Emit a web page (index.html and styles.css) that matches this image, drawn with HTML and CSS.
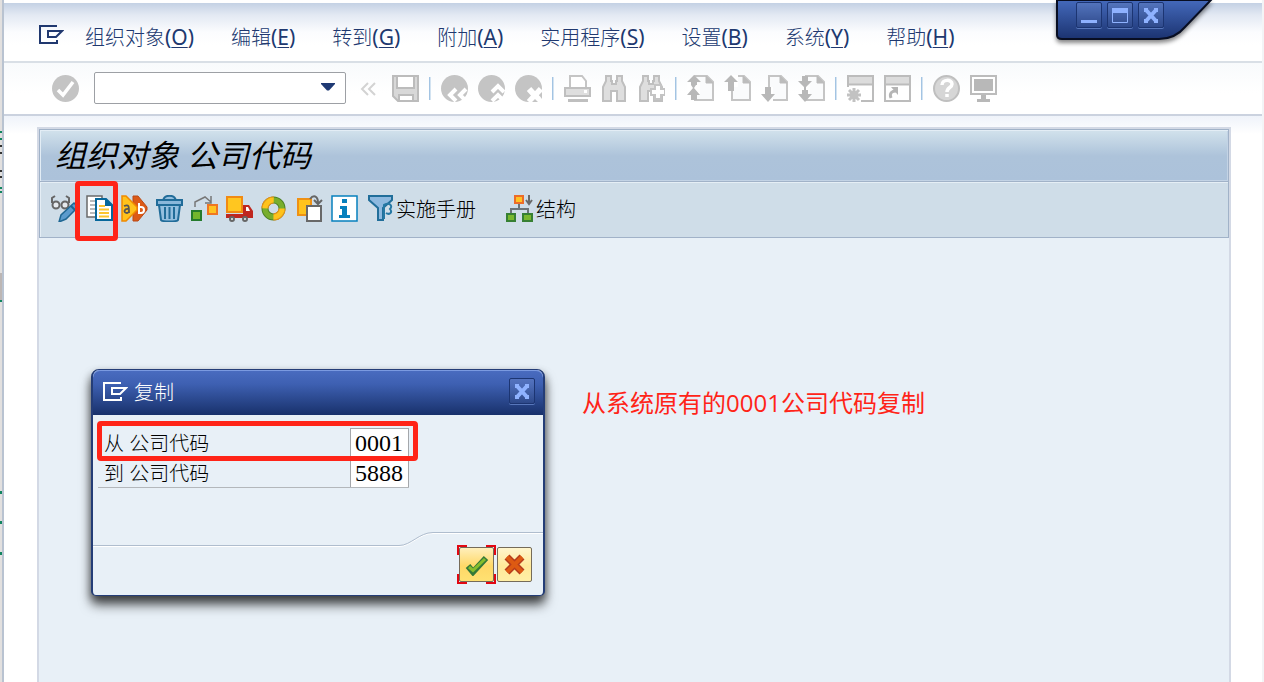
FILE: index.html
```html
<!DOCTYPE html>
<html lang="zh-CN">
<head>
<meta charset="utf-8">
<title>组织对象 公司代码</title>
<link rel="stylesheet" href="styles.css">
</head>
<body>
<svg class="defs" aria-hidden="true">
  <defs>
    <symbol id="pointer" viewBox="0 0 25 19"><path d="M18 1H1v17h17v-3" fill="none" stroke="currentColor" stroke-width="2"/><path d="M9 6h14l-6 6H9z" fill="none" stroke="currentColor" stroke-width="2"/></symbol>
    <symbol id="page" viewBox="0 0 27 27"><path d="M8 1h12l6 6v18H8z" fill="#fafbfc" stroke="#c5c5c5" stroke-width="2"/><path d="M19 1v7h7z" fill="#bcbcbc" stroke="#bcbcbc"/></symbol>
    <symbol id="cross" viewBox="0 0 16 15"><path d="M3 2l10 11M13 2L3 13" stroke="#8fb2ff" stroke-width="4"/><path d="M1 0h4v4H1zM11 0h4v4h-4zM1 11h4v4H1zM11 11h4v4h-4z" fill="#8fb2ff"/></symbol>
    <symbol id="disc" viewBox="0 0 27 27"><circle cx="13.500" cy="13.500" r="13.500" fill="#c4c4c4"/></symbol>
    <symbol id="binoculars" viewBox="0 0 27 27"><path d="M5 1h5v5h1v3h4V6h1V1h5v5l3 6v14h-8V16h-6v10H2V12l3-6z" fill="#dedede" stroke="#bfbfbf" stroke-width="2"/></symbol>
  </defs>
</svg>
<div class="desktop">
  <div class="sheet-edge"></div>
  <div class="app">
    <nav class="menubar">
      <button class="menu-icon" aria-label="菜单"><svg width="25" height="19"><use href="#pointer"/></svg></button>
      <button>组织对象<span class="key">(<u>O</u>)</span></button>
      <button>编辑<span class="key">(<u>E</u>)</span></button>
      <button>转到<span class="key">(<u>G</u>)</span></button>
      <button>附加<span class="key">(<u>A</u>)</span></button>
      <button>实用程序<span class="key">(<u>S</u>)</span></button>
      <button>设置<span class="key">(<u>B</u>)</span></button>
      <button>系统<span class="key">(<u>Y</u>)</span></button>
      <button>帮助<span class="key">(<u>H</u>)</span></button>
    </nav>

    <div class="toolbar">
      <button class="enter" aria-label="回车"><svg viewBox="0 0 27 27"><use href="#disc"/><path d="M6 15l5 5L21 7" fill="none" stroke="#fff" stroke-width="3.500"/></svg></button>
      <div class="command">
        <input type="text" aria-label="命令">
        <button aria-label="历史记录"><svg class="arrow" viewBox="0 0 14 8"><path d="M0 0h14v1L8 7.500H6L0 1z" fill="#1f3a74"/></svg></button>
      </div>
      <button class="collapse" aria-label="收起"><svg viewBox="0 0 27 27"><path d="M12 8l-6 6 6 6M19 8l-6 6 6 6" fill="none" stroke="#d3d3d3" stroke-width="2"/></svg></button>
      <button aria-label="保存"><svg viewBox="0 0 27 27"><path d="M1 1h25v25H6l-5-5z" fill="#d8d8d8" stroke="#bcbcbc" stroke-width="2"/><path d="M5 1h17v12H5zM7 26v-6h14v6z" fill="#fff" stroke="#bcbcbc" stroke-width="2"/></svg></button>
      <span class="sep"></span>
      <button aria-label="返回"><svg viewBox="0 0 27 27"><use href="#disc"/><path d="M15 14l-6 6 6 6M25 14l-6 6 6 6" fill="none" stroke="#fff" stroke-width="4"/></svg></button>
      <button aria-label="退出"><svg viewBox="0 0 27 27"><use href="#disc"/><path d="M14 17l6-6 6 6M14 26l6-6 6 6" fill="none" stroke="#fff" stroke-width="4"/></svg></button>
      <button aria-label="取消"><svg viewBox="0 0 27 27"><use href="#disc"/><path d="M14 14l12 13M26 14L14 27" fill="none" stroke="#fff" stroke-width="6"/><path d="M20 24l3 3h-6zM24 20l3-3v7z" fill="#c4c4c4"/></svg></button>
      <span class="sep"></span>
      <button aria-label="打印"><svg viewBox="0 0 27 27"><path d="M6 13V1h12l4 5v7" fill="#fff" stroke="#c5c5c5" stroke-width="2"/><path d="M1 13h25v8H1z" fill="#dedede" stroke="#bfbfbf" stroke-width="2"/><path d="M4 24h20v3H4z" fill="#bfbfbf"/><path d="M20 15h3v3h-3z" fill="#fff"/></svg></button>
      <button aria-label="查找"><svg viewBox="0 0 27 27"><use href="#binoculars"/></svg></button>
      <button aria-label="查找下一个"><svg viewBox="0 0 27 27"><use href="#binoculars"/><path d="M16 9h8v4h3v8h-3v4h-8v-4h-4v-8h4z" fill="#c4c4c4"/><path d="M18 11h4v4h4v4h-4v4h-4v-4h-4v-4h4z" fill="#fff"/></svg></button>
      <span class="sep"></span>
      <button aria-label="首页"><svg viewBox="0 0 27 27"><use href="#page"/><path d="M0 8h13v12H0z" fill="#fff"/><path d="M7 0l7 7h-4v3h-1l-2 3 6 7h-3v5H4v-5H0l6-7-2-3V7H0z" fill="#b8b8b8"/></svg></button>
      <button aria-label="上一页"><svg viewBox="0 0 27 27"><use href="#page"/><path d="M6 0h8v12H6z" fill="#fff"/><path d="M7 0l7 7h-4v9H4V7H0z" fill="#b8b8b8"/></svg></button>
      <button aria-label="下一页"><svg viewBox="0 0 27 27"><use href="#page"/><path d="M4 12h8v15H4z" fill="#fff"/><path d="M4 12h6v7h4l-7 8-7-8h4z" fill="#b8b8b8"/></svg></button>
      <button aria-label="末页"><svg viewBox="0 0 27 27"><use href="#page"/><path d="M3 8h9v16H3z" fill="#fff"/><path d="M4 1h6v5h4l-6 6v3h2v4h4l-7 8-7-8h4v-4h2v-3L0 6h4z" fill="#b8b8b8"/></svg></button>
      <span class="sep"></span>
      <button aria-label="新建会话"><svg viewBox="0 0 27 27"><path d="M1 12V1h25v25H14" fill="#fff" stroke="#bcbcbc" stroke-width="2"/><path d="M2 2h23v7H2z" fill="#dcdcdc"/><path d="M1 9.500h25" stroke="#bcbcbc" stroke-width="2"/><path d="M7 13v14M0 20h14M2 15l10 10M12 15L2 25" stroke="#c2c2c2" stroke-width="3"/><circle cx="7" cy="20" r="4" fill="#c2c2c2"/></svg></button>
      <button aria-label="创建快捷方式"><svg viewBox="0 0 27 27"><path d="M1 1h25v25H1z" fill="#fff" stroke="#bcbcbc" stroke-width="2"/><path d="M2 2h23v7H2z" fill="#dcdcdc"/><path d="M1 9.500h25" stroke="#bcbcbc" stroke-width="2"/><path d="M7 23c-2-5 1-7 5-7" fill="none" stroke="#b5b5b5" stroke-width="3"/><path d="M7 12h7v8z" fill="#b5b5b5"/></svg></button>
      <span class="sep"></span>
      <button aria-label="帮助"><svg viewBox="0 0 27 27"><circle cx="13.500" cy="13.500" r="12.500" fill="#d6d6d6" stroke="#bfbfbf" stroke-width="2"/><path d="M9 10c0-6 10-6 10-1 0 4-5 3-5 8M14 19v3" fill="none" stroke="#fff" stroke-width="3.500"/></svg></button>
      <button aria-label="本地布局"><svg viewBox="0 0 27 27"><path d="M1 1h25v18H1z" fill="#fff" stroke="#bcbcbc" stroke-width="2"/><path d="M4 4h19v12H4z" fill="#b8b8b8"/><path d="M11 20h5v4h4v3H7v-3h4z" fill="#b8b8b8"/></svg></button>
    </div>

    <main class="stage">
      <section class="pane">
        <h1>组织对象 公司代码</h1>
        <div class="actions">
          <button aria-label="显示/更改"><svg viewBox="0 0 27 27"><g fill="#e6eaee" stroke="#666" stroke-width="2"><path d="M1 8V3l3-2M18 8V3l-3-2" fill="none"/><circle cx="5" cy="10" r="3.500"/><circle cx="14" cy="10" r="3.500"/></g><path d="M23 8l4 4-12 12-7 3 2-7z" fill="#5b9bcd" stroke="#1f6793" stroke-width="1.500"/><path d="M20 11l4 4" stroke="#1f6793" stroke-width="2"/></svg></button>
          <button aria-label="复制为"><svg viewBox="0 0 27 27"><path d="M1 1h15v21H1z" fill="#fff" stroke="#6a6a6a" stroke-width="1.500"/><path d="M4 6h5M4 10h5M4 14h5M4 18h5" stroke="#a4a4a4" stroke-width="1.500"/><path d="M10 4h10l6 6v15H10z" fill="#fff" stroke="#06679b" stroke-width="2"/><path d="M19 3v8h8z" fill="#06679b"/><path d="M13 11h6M13 14.500h10M13 18h10M13 21.500h10" stroke="#fdc52f" stroke-width="2"/></svg></button>
          <button aria-label="替换"><svg viewBox="0 0 27 27"><path d="M12 1h5l9 11v3l-9 11h-5z" fill="#dc5a17" stroke="#b94916"/><path d="M1 1h4l11 11v3L5 26H1z" fill="#ffc21c" stroke="#f08a00" stroke-width="1.500"/><path d="M3 11c5-2 5 0 5 7M8 14c-5-1-6 4-2 4l2-1" fill="none" stroke="#555" stroke-width="1.800"/><path d="M18 8v10h2c4 0 4-6 0-6h-2" fill="none" stroke="#fff" stroke-width="2"/></svg></button>
          <button aria-label="删除"><svg viewBox="0 0 27 27"><path d="M7 6c1-7 12-7 13 0M3 10l2 15c1 2 16 2 17 0l2-15" fill="#94bfdf" stroke="#216c99" stroke-width="2"/><path d="M1 5h25v5H1z" fill="#8ab7da" stroke="#216c99" stroke-width="2"/><path d="M9 12v12M13.500 12v12M18 12v12" stroke="#216c99" stroke-width="2"/></svg></button>
          <button aria-label="移动"><svg viewBox="0 0 27 27"><path d="M4 12V7l10-5 6 5M20 1v7h-6" fill="none" stroke="#777" stroke-width="1.500"/><path d="M1 16h9v9H1z" fill="#74b62d" stroke="#257b2d" stroke-width="2"/><path d="M17 10h9v9h-9z" fill="#ffc321" stroke="#ef7623" stroke-width="2"/></svg></button>
          <button aria-label="传输"><svg viewBox="0 0 27 27"><path d="M1 2h15v15H1z" fill="#ffc620" stroke="#f18a13" stroke-width="2"/><path d="M0 19h17V10h6l4 6v7H0z" fill="#bf271f"/><path d="M20 12h2l2 4h-4z" fill="#fff"/><g fill="#eee" stroke="#666" stroke-width="2"><circle cx="6" cy="24" r="2"/><circle cx="19" cy="24" r="2"/></g></svg></button>
          <button aria-label="检查"><svg viewBox="0 0 27 27"><g fill="none"><circle cx="12.500" cy="13.500" r="8.500" stroke="#4d8125" stroke-width="7"/><circle cx="12.500" cy="13.500" r="8.500" stroke="#fa8b14" stroke-width="7" stroke-dasharray="13.352"/><circle cx="12.500" cy="13.500" r="8.500" stroke="#78ae2d" stroke-width="5"/><circle cx="12.500" cy="13.500" r="8.500" stroke="#ffc21c" stroke-width="5" stroke-dasharray="13.352"/></g></svg></button>
          <button aria-label="粘贴"><svg viewBox="0 0 27 27"><path d="M2 4h13v16H2z" fill="#ffc31d" stroke="#ef9114" stroke-width="2"/><path d="M14 4c3-4 8-4 8 4M18 5l4 4 4-4" fill="none" stroke="#666" stroke-width="2"/><path d="M11 11h14v15H11z" fill="#fff" stroke="#686868" stroke-width="2"/></svg></button>
          <button aria-label="信息"><svg viewBox="0 0 27 27"><path d="M1 1h25v25H1z" fill="#fff" stroke="#0780bd" stroke-width="1.500"/><path d="M11 4h5v4h-5zM9 11h7v9h3v3H8v-3h3v-6H9z" fill="#0780bd"/></svg></button>
          <button class="labelled"><svg viewBox="0 0 27 27"><path d="M3 1h23v4l-9 8v12h-5V13L3 5z" fill="#8eb9df" stroke="#216e9a" stroke-width="2"/><path d="M18 24V10c6-3 9 1 6 4 3 4-1 6-4 4" fill="none" stroke="#2678a4" stroke-width="2"/></svg>实施手册</button>
          <button class="labelled structure"><svg viewBox="0 0 27 27"><path d="M13 9v6M5 18v-4h17v4" fill="none" stroke="#6c7479" stroke-width="2"/><path d="M9 1h8v7H9z" fill="#ffc323" stroke="#ec6c28" stroke-width="2"/><path d="M1 19h8v7H1zM17 19h9v7h-9z" fill="#79b82e" stroke="#378033" stroke-width="2"/><path d="M23 0v8M20 5l3 4 3-4" fill="none" stroke="#696969" stroke-width="2"/></svg>结构</button>
        </div>
      </section>
    </main>
  </div>

  <div class="window-controls">
    <svg class="controls-shape" viewBox="0 0 160 52" aria-hidden="true">
      <defs><linearGradient id="cap" x2="0" y2="1"><stop stop-color="#4469bb"/><stop offset="1" stop-color="#1b3370"/></linearGradient></defs>
      <path d="M2 0V35q0 4 5 4H104q16 0 26-12L156 0z" fill="url(#cap)" stroke="#080e22" stroke-width="2"/>
    </svg>
    <div class="control-buttons">
      <button class="win-button" aria-label="最小化"><svg width="16" height="15"><path d="M0 12h16v3H0z" fill="#8fb2ff"/></svg></button>
      <button class="win-button" aria-label="最大化"><svg width="16" height="15"><path d="M.5.5h15v14H.5z" fill="none" stroke="#8fb2ff"/><path d="M0 0h16v5H0z" fill="#8fb2ff"/></svg></button>
      <button class="win-button" aria-label="关闭"><svg width="16" height="15"><use href="#cross"/></svg></button>
    </div>
  </div>

  <section class="dialog" role="dialog" aria-labelledby="dialog-title">
    <header>
      <svg width="25" height="19"><use href="#pointer"/></svg>
      <h2 id="dialog-title">复制</h2>
      <button class="win-button" aria-label="关闭"><svg width="16" height="15"><use href="#cross"/></svg></button>
    </header>
    <form class="fields">
      <div class="field"><label for="from">从 公司代码</label><input id="from" type="text" value="0001"></div>
      <div class="field"><label for="to">到 公司代码</label><input id="to" type="text" value="5888"></div>
    </form>
    <svg class="divider" viewBox="0 0 450 15" aria-hidden="true"><path d="M0 14.500h306c12 0 20-13 34-13h110" fill="none" stroke="#fff"/><path d="M0 13.500h306c12 0 20-13 34-13h110" fill="none" stroke="#afbdce"/></svg>
    <footer>
      <button class="confirm" aria-label="继续"><svg viewBox="0 0 24 22"><path d="M3 12l5 6L21 4" fill="none" stroke="#357938" stroke-width="6"/><path d="M4 13l4 3.500L20 5" fill="none" stroke="#86bd2c" stroke-width="3"/></svg></button>
      <button aria-label="取消"><svg viewBox="0 0 24 22"><path d="M4 3l15 15M19 3L4 18" stroke="#b63c1b" stroke-width="7"/><path d="M4 3l15 15M19 3L4 18" stroke="#dd5a12" stroke-width="4"/></svg></button>
    </footer>
  </section>

  <div class="mark mark-copy"></div>
  <div class="mark mark-from"></div>
  <p class="note">从系统原有的0001公司代码复制</p>
</div>
</body>
</html>
```

FILE: styles.css
```css
* { box-sizing: border-box; }
body {
  margin: 0;
  font-family: "Open Sans", "Noto Sans CJK SC", sans-serif;
  font-size: 20px;
  font-weight: 300;
  color: #000;
}
button {
  font: inherit;
  color: inherit;
  padding: 0;
  border: 0;
  background: none;
  display: flex;
  align-items: center;
  justify-content: center;
}
svg { display: block; flex: none; }
.defs { position: absolute; width: 0; height: 0; }
.desktop {
  position: relative;
  display: flex;
  min-height: 100vh;
  overflow: hidden;
}
.sheet-edge {
  width: 2px;
  background:
    linear-gradient(#11855f, #11855f) 0 131px / 2px 2px no-repeat,
    linear-gradient(#11855f, #11855f) 0 138px / 2px 2px no-repeat,
    linear-gradient(#333, #333) 0 145px / 2px 2px no-repeat,
    linear-gradient(#333, #333) 0 152px / 2px 2px no-repeat,
    linear-gradient(#333, #333) 0 170px / 2px 2px no-repeat,
    linear-gradient(#333, #333) 0 176px / 2px 2px no-repeat,
    linear-gradient(#11855f, #11855f) 0 187px / 2px 2px no-repeat,
    linear-gradient(#11855f, #11855f) 0 191px / 2px 2px no-repeat,
    linear-gradient(#bcb6b4, #bcb6b4) 0 273px / 2px 27px no-repeat,
    linear-gradient(#11855f, #11855f) 0 300px / 2px 2px no-repeat,
    linear-gradient(#11855f, #11855f) 0 491px / 2px 3px no-repeat,
    linear-gradient(#11855f, #11855f) 0 521px / 2px 3px no-repeat,
    linear-gradient(#11855f, #11855f) 0 552px / 2px 3px no-repeat,
    #e2e0df;
}
.app {
  flex: 1;
  min-width: 0;
  display: flex;
  flex-direction: column;
  border-left: 2px solid #b9c3d1;
  border-right: 2px solid #f3f4f6;
  background: #fff;
}
.menubar {
  display: flex;
  align-items: center;
  gap: 37px;
  height: 63px;
  padding: 13px 35px 0;
  border-bottom: 2px solid #d9dfe6;
  background: linear-gradient(#fff 3px, #c4d1e4 3px, #e3e9f3 15px, #fbfcfe 32px, #fff 45px);
  color: #20386f;
  white-space: nowrap;
}
.key { font: 400 21px "Noto Sans", sans-serif; }
.key u { text-underline-offset: 2px; text-decoration-thickness: 1px; }
.menubar button { display: block; line-height: 28px; }
.menubar .menu-icon { margin-right: -16px; padding-bottom: 6px; }
.toolbar {
  display: flex;
  align-items: center;
  gap: 10px;
  height: 53px;
  padding: 0 48px 1px;
  border-bottom: 2px solid #cbd2df;
  background: linear-gradient(#f8fafc, #fff 30px);
}
.toolbar svg, .actions svg { width: 27px; height: 27px; }
.enter { margin-right: 5px; }
.collapse { margin-right: -1px; }
.sep { width: 2px; height: 23px; background: linear-gradient(90deg, #a3c4e3 50%, #d3e3f1 50%); }
.command {
  display: flex;
  width: 252px;
  height: 32px;
  border: 1px solid #9da0a5;
  border-radius: 2px;
  background: #fff;
}
.command input {
  flex: 1;
  min-width: 0;
  border: 0;
  padding: 0 6px;
  background: none;
  font: inherit;
}
.command button { width: 34px; padding-bottom: 2px; }
.toolbar .arrow { width: 14px; height: 8px; }
.stage {
  flex: 1;
  display: flex;
  padding: 11px 31px 0 33px;
  background: linear-gradient(#eff3fa, #fff 18px);
}
.pane {
  flex: 1;
  border: 2px solid #d3d9e5;
  border-bottom: 0;
  background: #e8f0f7;
}
.pane h1 {
  margin: 0;
  padding: 0 15px;
  height: 53px;
  line-height: 50px;
  font-size: 31px;
  font-style: italic;
  font-weight: 400;
  border: 1px solid #a1b2c8;
  background: linear-gradient(#d2e2ec, #adc3da 26px, #acc2da);
  box-shadow: inset 1px 1px #e3edf5, inset -1px -1px #c3d3e5;
}
.actions {
  display: flex;
  align-items: center;
  gap: 8px;
  height: 56px;
  padding: 0 11px 2px;
  border: 1px solid #a1b2c8;
  border-top: 0;
  background: #cfdde8;
  box-shadow: inset 1px 1px #e5eef5;
}
.labelled { gap: 3px; }
.structure { margin-left: 22px; }
.window-controls {
  position: absolute;
  top: 0;
  right: 49px;
  width: 160px;
  height: 52px;
}
.controls-shape { width: 160px; height: 52px; filter: drop-shadow(0 3px 2px #0007); }
.control-buttons {
  position: absolute;
  top: 2px;
  left: 21px;
  display: flex;
  gap: 5px;
}
.win-button {
  width: 26px;
  height: 26px;
  border: 1px solid #1c3572;
  border-radius: 2px;
  background: linear-gradient(#ffffff18, #ffffff08);
  box-shadow: 0 1px #5877bb;
}
.dialog {
  position: absolute;
  left: 91px;
  top: 369px;
  width: 454px;
  border: 2px solid #243d77;
  border-top-width: 1px;
  border-bottom-width: 1px;
  border-radius: 8px 8px 5px 5px;
  background: #e8f0f7;
  box-shadow: 0 9px 12px #0009, 0 4px 8px #0006;
}
.dialog header {
  display: flex;
  align-items: center;
  height: 45px;
  padding: 0 8px 3px 10px;
  gap: 6px;
  color: #fff;
  border-radius: 7px 7px 0 0;
  background: linear-gradient(#4a6cc0, #3e60b2 14px, #18316b);
  box-shadow: inset 0 1px #7b9ae0;
}
.dialog h2 { flex: 1; margin: 0; font: inherit; }
.fields { padding: 13px 4px 0 5px; }
.field {
  display: flex;
  width: 311px;
  height: 30px;
  line-height: 31px;
}
.field + .field { border-bottom: 1px solid #b3b7bb; }
.field label { flex: 1; padding-left: 6px; }
.field input {
  width: 59px;
  padding: 0 4px;
  border: 1px solid #a4a7ab;
  border-bottom: 0;
  background: #fff;
  font: 24px "Liberation Serif", serif;
}
.divider { width: 100%; height: auto; margin-top: 44px; }
.dialog footer {
  display: flex;
  justify-content: flex-end;
  gap: 3px;
  padding: 0 11px 13px;
}
.dialog footer button {
  width: 35px;
  height: 35px;
  border: 1px solid #756b59;
  border-radius: 2px;
  background: linear-gradient(#fff5cd, #ffe999 55%, #ffefa6);
}
.dialog footer svg { width: 24px; height: 22px; }
.dialog footer .confirm {
  position: relative;
  background: linear-gradient(#ffefbb, #ffd867 55%, #ffe172);
}
.confirm::after {
  content: "";
  position: absolute;
  inset: -3px;
  --red: linear-gradient(#e10712, #e10712);
  background:
    var(--red) 0 0 / 10px 2px, var(--red) 0 0 / 2px 10px,
    var(--red) 100% 0 / 10px 2px, var(--red) 100% 0 / 2px 10px,
    var(--red) 0 100% / 10px 2px, var(--red) 0 100% / 2px 10px,
    var(--red) 100% 100% / 10px 2px, var(--red) 100% 100% / 2px 10px;
  background-repeat: no-repeat;
}
.mark {
  position: absolute;
  border: 5px solid #ff2418;
  border-radius: 4px;
  pointer-events: none;
}
.mark-copy { left: 75px; top: 181px; width: 43px; height: 60px; }
.mark-from { left: 97px; top: 421px; width: 321px; height: 40px; }
.note {
  position: absolute;
  left: 582px;
  top: 385px;
  margin: 0;
  font: 400 24px/36px "Open Sans", "Noto Sans CJK SC", sans-serif;
  color: #ff2418;
  white-space: nowrap;
}
```
